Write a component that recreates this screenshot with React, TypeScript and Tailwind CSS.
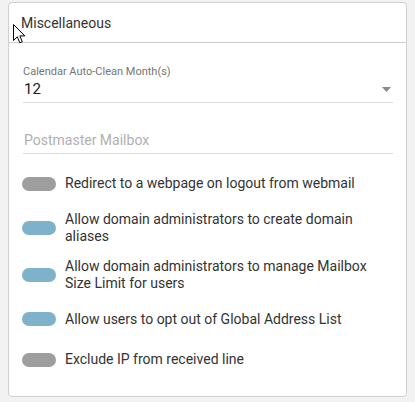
import React from 'react';

type Toggle = { label: string; on: boolean };

const toggles: Toggle[] = [
  { label: 'Redirect to a webpage on logout from webmail', on: false },
  { label: 'Allow domain administrators to create domain aliases', on: true },
  { label: 'Allow domain administrators to manage Mailbox Size Limit for users', on: true },
  { label: 'Allow users to opt out of Global Address List', on: true },
  { label: 'Exclude IP from received line', on: false },
];

function Cursor() {
  return (
    <svg className="absolute left-[13px] top-[24px]" width="13" height="20" viewBox="0 0 13 20">
      <path
        d="M0.5 0.5 L0.5 16.5 L4.3 12.8 L6.8 18.8 L9.3 17.8 L6.8 11.9 L11.8 11.9 Z"
        fill="#fff"
        stroke="#000"
        strokeWidth="1"
        strokeLinejoin="round"
      />
    </svg>
  );
}

export default function App() {
  return (
    <div className="relative min-h-[402px] w-[415px] bg-[#f2f2f2] pt-[2px] pl-[8px] font-['Roboto',sans-serif]">
      <div className="h-[395px] w-[399px] rounded-[4px] border border-[#cfcfcf] bg-white">
        <div className="flex h-[40px] items-center border-b border-[#cfcfcf] px-[12px] pt-[2px] text-[14px] text-[#333]">
          Miscellaneous
        </div>

        <div className="px-[14px] pt-[22px]">
          <div className="mr-[-1px]">
            <div className="text-[11px] leading-[14px] text-[#757575]">Calendar Auto-Clean Month(s)</div>
            <div className="flex items-center justify-between border-b border-[#dcdcdc] pb-[3px]">
              <span className="pl-px text-[15px] leading-[20px] text-[#212121]">12</span>
              <svg width="9" height="5" viewBox="0 0 9 5" className="mr-[2px] mt-[1px]">
                <path d="M0 0 H9 L4.5 5 Z" fill="#8a8a8a" />
              </svg>
            </div>
          </div>

          <div className="mr-[-1px] mt-[27px] border-b border-[#dcdcdc] pb-[3px] pl-px text-[14px] leading-[20px] text-[#b0b0b0]">
            Postmaster Mailbox
          </div>

          <div className="-ml-px mt-[16px] flex flex-col gap-[13.5px]">
            {toggles.map((t) => (
              <div key={t.label} className="flex min-h-[27px] items-center gap-[9px]">
                <div
                  className={
                    'h-[14px] w-[34px] shrink-0 rounded-full ' + (t.on ? 'bg-[#7eb2cb]' : 'bg-[#9e9e9e]')
                  }
                />
                <span className="pr-[20px] text-[14px] leading-[17px] text-[#333]">{t.label}</span>
              </div>
            ))}
          </div>
        </div>
      </div>
      <Cursor />
    </div>
  );
}
